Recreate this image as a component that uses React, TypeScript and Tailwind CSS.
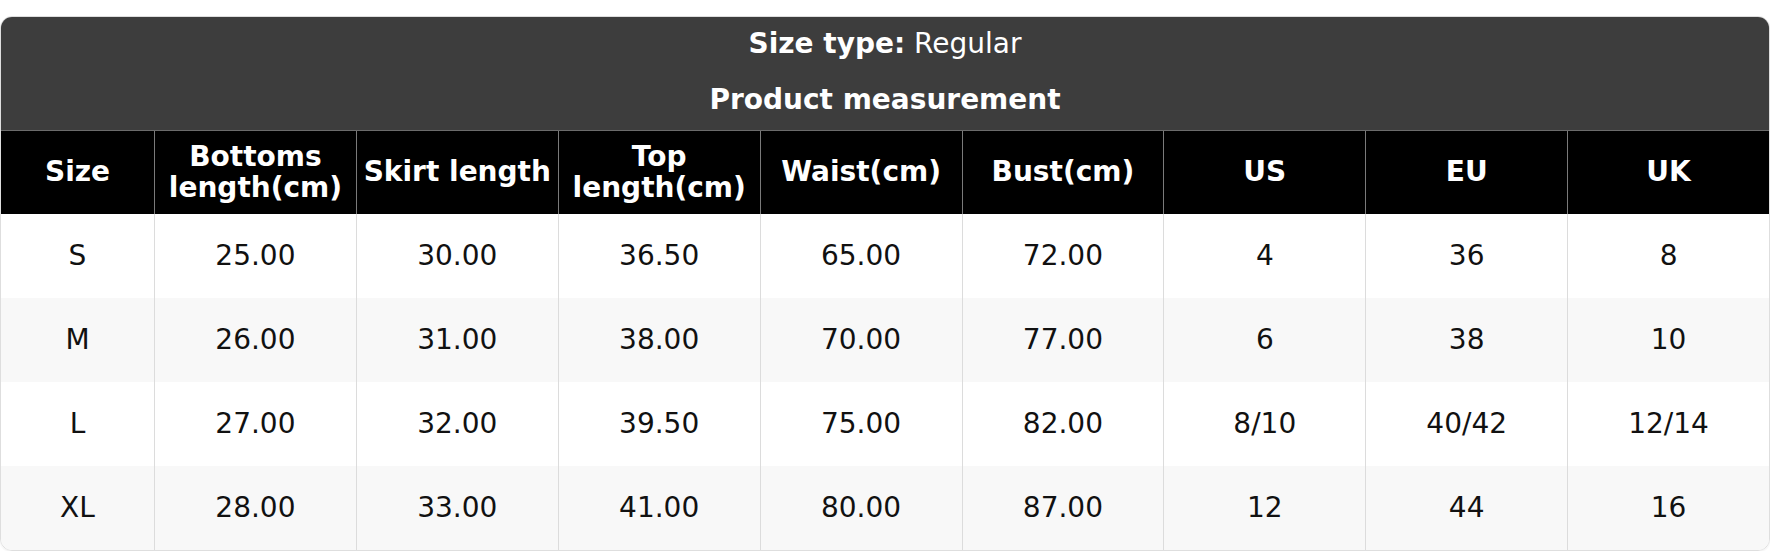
import React from 'react';

const headers = [
  'Size',
  'Bottoms length(cm)',
  'Skirt length',
  'Top length(cm)',
  'Waist(cm)',
  'Bust(cm)',
  'US',
  'EU',
  'UK',
];

const rows: string[][] = [
  ['S', '25.00', '30.00', '36.50', '65.00', '72.00', '4', '36', '8'],
  ['M', '26.00', '31.00', '38.00', '70.00', '77.00', '6', '38', '10'],
  ['L', '27.00', '32.00', '39.50', '75.00', '82.00', '8/10', '40/42', '12/14'],
  ['XL', '28.00', '33.00', '41.00', '80.00', '87.00', '12', '44', '16'],
];

const gridCols = 'grid grid-cols-[153px_repeat(8,minmax(0,1fr))]';

export default function App() {
  return (
    <div className="w-full bg-white pt-[16px] font-['DejaVu_Sans',sans-serif] text-[28px]">
      <div className="w-full overflow-hidden rounded-[12px] border border-[#dedede] shadow-[0_1px_2px_rgba(0,0,0,0.06)]">
        {/* title block */}
        <div className="flex flex-col items-center gap-[26px] bg-[#3d3d3d] pt-[12px] pb-[15px] text-white leading-[30px]">
          <div>
            <span className="font-bold">Size type:</span> Regular
          </div>
          <div className="font-bold">Product measurement</div>
        </div>

        {/* column headers */}
        <div className={`${gridCols} h-[84px] border-t border-[#6b6b6b] bg-black text-white`}>
          {headers.map((h, i) => (
            <div
              key={h}
              className={`flex items-center justify-center px-[6px] text-center font-bold leading-[1.1] ${
                i > 0 ? 'border-l border-[#7a7a7a]' : ''
              }`}
            >
              {h}
            </div>
          ))}
        </div>

        {/* body */}
        {rows.map((row, r) => (
          <div
            key={row[0]}
            className={`${gridCols} h-[84px] text-[#111] ${r % 2 === 1 ? 'bg-[#f8f8f8]' : 'bg-white'}`}
          >
            {row.map((cell, i) => (
              <div
                key={i}
                className={`flex items-center justify-center text-center ${
                  i > 0 ? 'border-l border-[#dcdcdc]' : ''
                }`}
              >
                {cell}
              </div>
            ))}
          </div>
        ))}
      </div>
    </div>
  );
}
